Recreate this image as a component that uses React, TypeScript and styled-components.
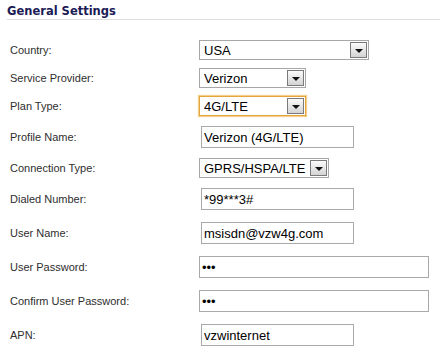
import React from "react";
import styled, { createGlobalStyle } from "styled-components";

const Global = createGlobalStyle`
  html, body { margin: 0; padding: 0; background: #ffffff; }
  body { font-family: "Liberation Sans", Arial, sans-serif; }
  * { box-sizing: border-box; }
`;

const Page = styled.div`
  width: 440px;
  height: 359px;
  background: #ffffff;
  overflow: hidden;
`;

const Header = styled.div`
  margin-left: 7px;
  padding-top: 3px;
  height: 20px;
  border-bottom: 1px solid #dedede;
  font-family: "DejaVu Sans", Verdana, sans-serif;
  font-weight: bold;
  font-size: 11.5px;
  line-height: 16px;
  color: #1b1b55;
`;

const Form = styled.div`
  display: flex;
  flex-direction: column;
  padding-top: 20px;
`;

const Row = styled.div<{ $gap: number }>`
  display: flex;
  align-items: center;
  margin-bottom: ${(p) => p.$gap}px;
`;

const Label = styled.div`
  width: 199px;
  padding-left: 10px;
  font-family: "Liberation Sans", Arial, sans-serif;
  font-size: 11px;
  color: #2e2e2e;
  white-space: nowrap;
`;

const SelectBox = styled.div<{ $w: number; $focus?: boolean }>`
  position: relative;
  display: flex;
  align-items: center;
  width: ${(p) => p.$w}px;
  height: 20px;
  border: 1px solid ${(p) => (p.$focus ? "#e3a53c" : "#a7a7a7")};
  box-shadow: ${(p) => (p.$focus ? "0 0 1px 1px #f3d08e" : "none")};
  background: #ffffff;
  padding-left: 4px;
  font-family: "Liberation Sans", Arial, sans-serif;
  font-size: 13px;
  color: #000000;
`;

const SelectText = styled.span`
  flex: 1;
  white-space: nowrap;
  overflow: hidden;
`;

const DropButton = styled.span`
  display: flex;
  align-items: center;
  justify-content: center;
  width: 17px;
  height: 16px;
  margin-right: 1px;
  border: 1px solid #7a7a7a;
  background: linear-gradient(#fbfbfb, #d3d3d3);
`;

const Arrow = styled.span`
  width: 0;
  height: 0;
  border-left: 4px solid transparent;
  border-right: 4px solid transparent;
  border-top: 4px solid #111111;
  margin-top: 1px;
`;

const TextInput = styled.input<{ $w: number; $indent: number }>`
  width: ${(p) => p.$w}px;
  height: 22px;
  margin: 0 0 0 ${(p) => p.$indent}px;
  padding: 0 2px;
  border: 1px solid #a9a9a9;
  background: #ffffff;
  font-family: "Liberation Sans", Arial, sans-serif;
  font-size: 13px;
  color: #000000;
  outline: none;
`;

type SelectProps = { value: string; width: number; focus?: boolean };

const Select = ({ value, width, focus }: SelectProps) => (
  <SelectBox $w={width} $focus={focus}>
    <SelectText>{value}</SelectText>
    <DropButton>
      <Arrow />
    </DropButton>
  </SelectBox>
);

type Field =
  | { label: string; kind: "select"; value: string; width: number; focus?: boolean; gap: number }
  | { label: string; kind: "text" | "password"; value: string; width: number; indent: number; gap: number };

const fields: Field[] = [
  { label: "Country:", kind: "select", value: "USA", width: 170, gap: 8 },
  { label: "Service Provider:", kind: "select", value: "Verizon", width: 107, gap: 8 },
  { label: "Plan Type:", kind: "select", value: "4G/LTE", width: 107, focus: true, gap: 10 },
  { label: "Profile Name:", kind: "text", value: "Verizon (4G/LTE)", width: 153, indent: 2, gap: 10 },
  { label: "Connection Type:", kind: "select", value: "GPRS/HSPA/LTE", width: 130, gap: 10 },
  { label: "Dialed Number:", kind: "text", value: "*99***3#", width: 153, indent: 2, gap: 12 },
  { label: "User Name:", kind: "text", value: "msisdn@vzw4g.com", width: 153, indent: 2, gap: 12 },
  { label: "User Password:", kind: "password", value: "abc", width: 230, indent: 0, gap: 12 },
  { label: "Confirm User Password:", kind: "password", value: "abc", width: 230, indent: 0, gap: 12 },
  { label: "APN:", kind: "text", value: "vzwinternet", width: 153, indent: 2, gap: 0 },
];

export default function App() {
  return (
    <Page>
      <Global />
      <Header>General Settings</Header>
      <Form>
        {fields.map((f) => (
          <Row key={f.label} $gap={f.gap}>
            <Label>{f.label}</Label>
            {f.kind === "select" ? (
              <Select value={f.value} width={f.width} focus={f.focus} />
            ) : (
              <TextInput
                type={f.kind}
                readOnly
                defaultValue={f.value}
                $w={f.width}
                $indent={f.indent}
              />
            )}
          </Row>
        ))}
      </Form>
    </Page>
  );
}
